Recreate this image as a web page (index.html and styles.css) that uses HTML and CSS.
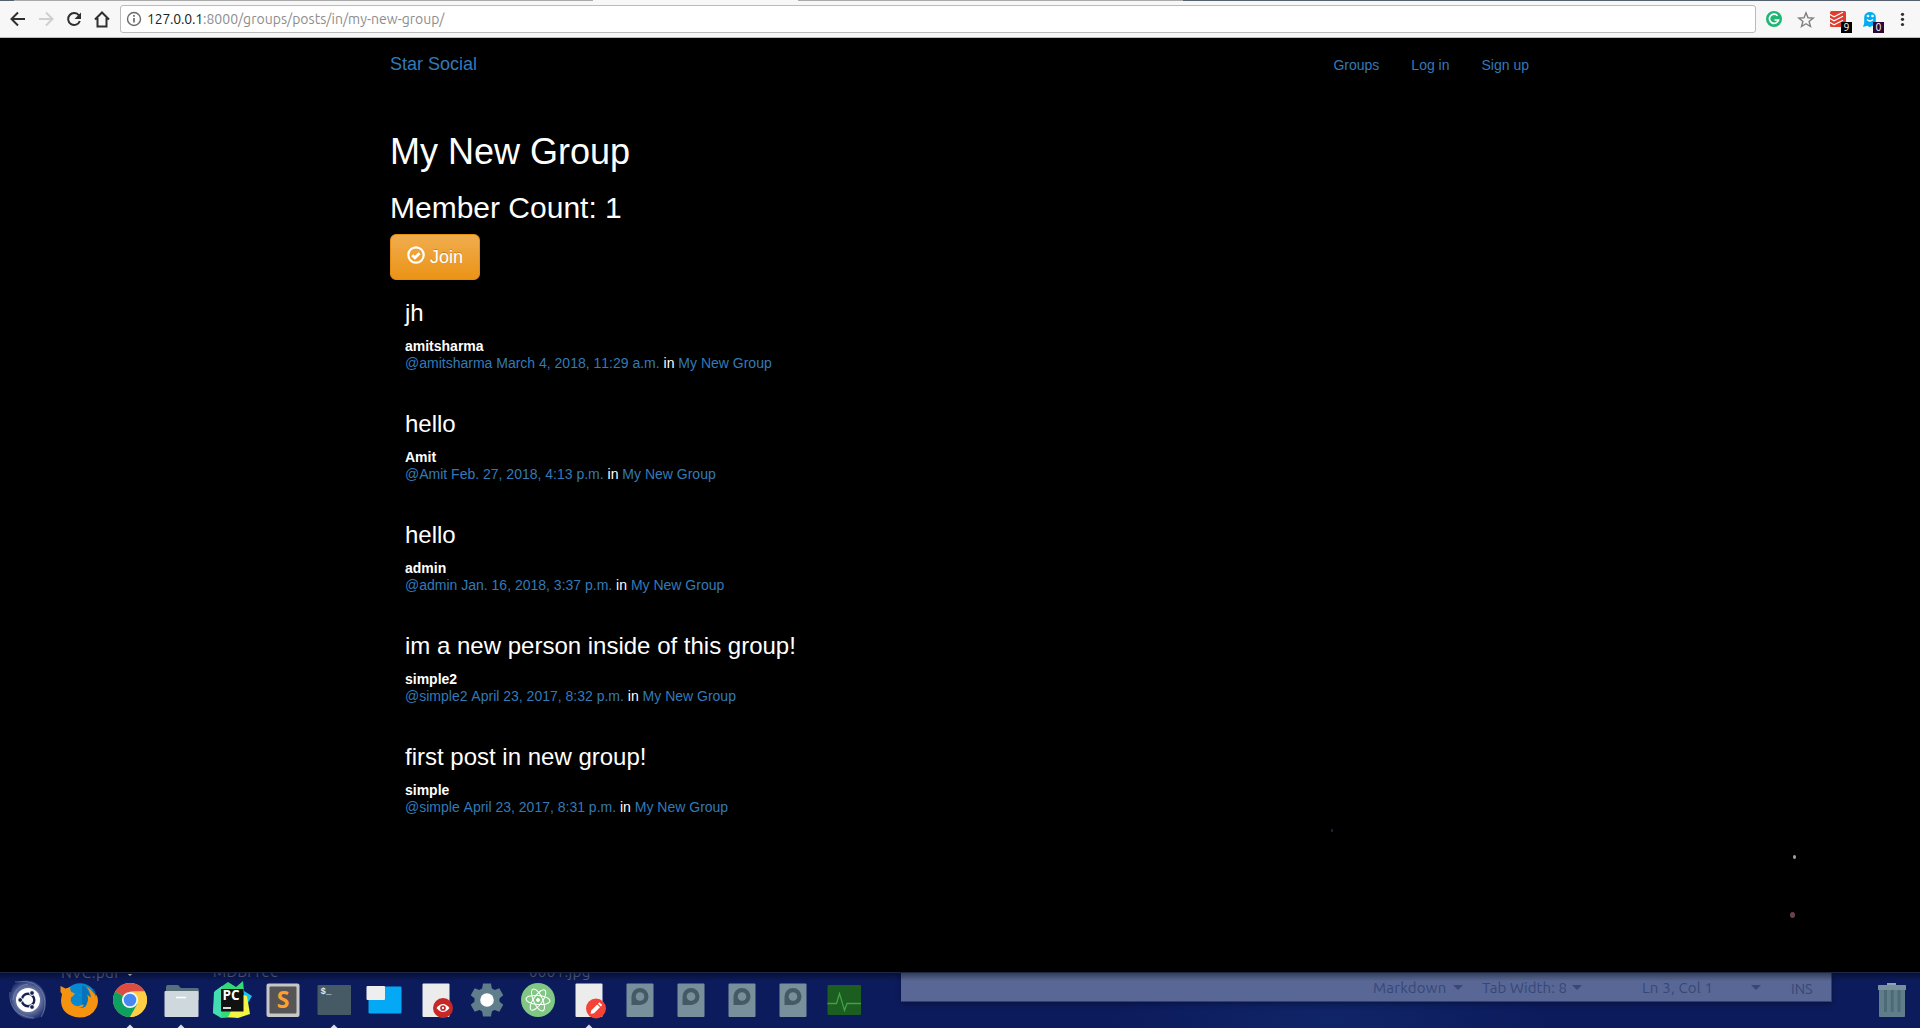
FILE: index.html
```html
<!DOCTYPE html>
<html lang="en">
<head>
<meta charset="utf-8">
<title>Star Social</title>
<link rel="stylesheet" href="styles.css">
</head>
<body>
<div class="screen">
  <header class="toolbar">
    <div class="tab-edge"><i class="te-dark a"></i><i class="te-gray b"></i><i class="te-open c"></i><i class="te-gray d"></i><i class="te-dark e"></i></div>
    <svg class="nav-icons" viewBox="0 0 120 36" fill="none" stroke="#2f2f2f" stroke-width="2">
      <path d="M25 18H12M18 11.5L11.5 18l6.500 6.500"/>
      <path stroke="#cfcfcf" d="M39 18h13M46 11.500L52.500 18 46 24.500"/>
      <path d="M79 14.500A6 6 0 1 0 79.800 20"/><path fill="#2f2f2f" stroke="none" d="M81 11.500v6.500h-6.500z"/>
      <path d="M95 18.500L102 11.500l7 7M97.500 17v8.500h9V17"/>
    </svg>
    <div class="omnibox">
      <svg class="info" viewBox="0 0 16 16" fill="none" stroke="#6b6b6b" stroke-width="1.400"><circle cx="8" cy="8" r="6.500"/><path d="M8 7v4.500M8 4v1.700" stroke-width="1.700"/></svg>
      <span class="url"><b>127.0.0.1</b>:8000/groups/posts/in/my-new-group/</span>
    </div>
    <svg class="ext-icons" viewBox="0 0 163 36">
      <circle cx="17" cy="18" r="8" fill="#1db774"/><path d="M20.500 14.700A4.600 4.600 0 1 0 21.500 19H17.500" fill="none" stroke="#fff" stroke-width="1.700"/>
      <path d="M49 11.800l2 5 5.200.300-4.100 3.300 1.400 5.100L49 22.700l-4.500 2.800 1.400-5.100-4.100-3.300 5.200-.300z" fill="none" stroke="#808080" stroke-width="1.400"/>
      <rect x="73" y="10" width="16" height="16" rx="1.500" fill="#e23c2e"/>
      <path d="M73 13.500l4 2.200 9-4.500M73 17.500l4 2.200 9-4.500M73 21.500l4 2.200 9-4.500" stroke="#fff" stroke-width="1.200" fill="none"/>
      <rect x="84" y="21" width="11" height="11" fill="#000"/>
      <path d="M106 26l1.200-4V16a5.800 5 0 0 1 11.600 0v5l1.500 4-3 .800-2-1-2.500 1.500-2.500-1.500z" fill="#00aef0"/>
      <circle cx="111" cy="15" r="1.300" fill="#fff"/><circle cx="115.500" cy="15" r="1.300" fill="#fff"/><path d="M110 18.500q3 3 6 0" stroke="#fff" fill="none" stroke-width="1.200"/>
      <rect x="116" y="21" width="11" height="11" fill="#2b0638"/>
      <g class="badge-num"><text x="89.500" y="30.300">9</text><text x="121.500" y="30.300">0</text></g>
      <g fill="#2f2f2f"><circle cx="145.500" cy="13.300" r="1.600"/><circle cx="145.500" cy="18.300" r="1.600"/><circle cx="145.500" cy="23.500" r="1.600"/></g>
    </svg>
  </header>

  <main class="page">
    <i class="star s1"></i><i class="star s2"></i><i class="star s3"></i>
    <div class="container">
      <nav class="navbar">
        <a class="brand">Star Social</a>
        <div class="links"><a>Groups</a><a>Log in</a><a>Sign up</a></div>
      </nav>
      <h1>My New Group</h1>
      <h2>Member Count: 1</h2>
      <a class="btn">
        <svg class="ok" viewBox="0 0 18 18" fill="none" stroke="#fff"><circle cx="9" cy="9" r="7.700" stroke-width="2.200"/><path d="M5.200 9.200l2.700 2.600 4.700-4.600" stroke-width="2.800"/></svg>
        <span>Join</span>
      </a>
      <section class="posts">
        <article><h3>jh</h3><strong>amitsharma</strong><p><a>@amitsharma</a> <a>March 4, 2018, 11:29 a.m.</a> in <a>My New Group</a></p></article>
        <article><h3>hello</h3><strong>Amit</strong><p><a>@Amit</a> <a>Feb. 27, 2018, 4:13 p.m.</a> in <a>My New Group</a></p></article>
        <article><h3>hello</h3><strong>admin</strong><p><a>@admin</a> <a>Jan. 16, 2018, 3:37 p.m.</a> in <a>My New Group</a></p></article>
        <article><h3>im a new person inside of this group!</h3><strong>simple2</strong><p><a>@simple2</a> <a>April 23, 2017, 8:32 p.m.</a> in <a>My New Group</a></p></article>
        <article><h3>first post in new group!</h3><strong>simple</strong><p><a>@simple</a> <a>April 23, 2017, 8:31 p.m.</a> in <a>My New Group</a></p></article>
      </section>
    </div>
  </main>

  <footer class="dock">
    <span class="ghost g1">NVC.pdf</span><span class="ghost g2">MDBFree</span><span class="ghost g3">0001.jpg</span>
    <div class="editor">
      <span class="st md">Markdown</span><i class="caret c1"></i>
      <span class="st tw">Tab Width: 8</span><i class="caret c2"></i>
      <span class="st ln">Ln 3, Col 1</span><i class="caret c3"></i>
      <span class="st ins">INS</span>
    </div>
    <div class="apps">
      <svg viewBox="0 0 51 54"><defs><radialGradient id="halo" gradientUnits="userSpaceOnUse" cx="26" cy="26" r="21"><stop offset=".55" stop-color="#8f9cc2"/><stop offset="1" stop-color="#1c2c6a"/></radialGradient></defs>
        <path d="M11 11Q20 5 30 7Q43 12 44 26Q44 36 41 42Q33 47 22 44Q10 39 9 26Q8 18 11 11Z" fill="url(#halo)" opacity=".75"/><path d="M13 8Q36 4 42 22Q45 34 39 43M8 18Q6 41 32 44M11 26Q12 12 26 10" fill="none" stroke="#9ba7c8" stroke-width=".7" opacity=".7"/>
        <circle cx="26" cy="26" r="12" fill="#fff"/><circle cx="26" cy="26" r="6.300" fill="none" stroke="#17244f" stroke-width="2.400"/><g fill="#17244f" stroke="#fff" stroke-width="1"><circle cx="18.200" cy="26" r="2.400"/><circle cx="30" cy="19" r="2.400"/><circle cx="30" cy="33" r="2.400"/></g></svg>
      <svg viewBox="0 0 51 54"><circle cx="27" cy="26" r="16.800" fill="#0788d1"/><path d="M29 11q6 2 7 9l5-6q4 7 0 14-4 7-12 4z" fill="#075a9c" opacity=".45"/><path d="M7.500 12l5 2.500 5-1.500q-1 3 1 5l3.500 1.500q-1 2-4 4-1 3 1 6 4 4 8 2 2-1 4-1-2 4-6 3 7 2 9-4 2-5 0-9l4 3q-1-7-5-11 7 4 10 10l.500-2q3 7 0 13-5 10-17 10Q8 42 8 26l1-6-1.500-2z" fill="#f5920f"/></svg>
      <svg viewBox="0 0 51 54"><circle cx="26" cy="26" r="17" fill="#ffc94d"/><path d="M26 26L11.300 17.500A17 17 0 0 1 40.700 17.500H26z" fill="#dd4c40"/><path d="M11.300 17.500A17 17 0 0 0 26 43l8-13-8-4z" fill="#0ea05e"/><path d="M40.700 17.500A17 17 0 0 1 26 43L34 28.500 29 17.500z" fill="#ffce44"/><circle cx="26" cy="26" r="7.200" fill="#4688f1" stroke="#f3f3f3" stroke-width="1.800"/><path class="run" d="M26 50.500l3.500 3.500h-7zM22.500-1h7L26 2z"/></svg>
      <svg viewBox="0 0 51 54"><path d="M11 13q0-2 2-2h10l3 3h16q2 0 2 2v10H11z" fill="#566f7b"/><rect x="9.500" y="17" width="34" height="26" rx="1" fill="#cfd8dc"/><path d="M21 23.500h10" stroke="#fff" stroke-width="1.500"/><path class="run" d="M26 50.500l3.500 3.500h-7z"/></svg>
      <svg viewBox="0 0 51 54"><path d="M9 17l13-9 8 5 7-6 1 10-6 26-17 1L7 39z" fill="#31db75"/><path d="M8 18l8-6 2 12-3 19-8-4z" fill="#43ddb1"/><path d="M38 17l8 5-9 15z" fill="#13c8f1"/><path d="M34 20l7 2 3 18-12 4-10-1z" fill="#f2f642"/><rect x="15" y="15" width="22.500" height="22.500" fill="#111"/><text class="pc" x="16.500" y="26">PC</text><path d="M17 34h8" stroke="#fff" stroke-width="1.700"/></svg>
      <svg viewBox="0 0 51 54"><rect x="9.500" y="9.500" width="33" height="33.500" rx="2" fill="#c7c7c7"/><rect x="12.500" y="12.500" width="27" height="27" rx="1" fill="#555"/><text class="sublime" x="26" y="34">S</text></svg>
      <svg viewBox="0 0 51 54"><rect x="9.500" y="11" width="33.500" height="30" rx="1" fill="#455a64"/><text class="term" x="12.500" y="20">$_</text><path class="run" d="M26 50.500l3.500 3.500h-7z"/></svg>
      <svg viewBox="0 0 51 54"><rect x="9.500" y="12.500" width="33" height="27" rx="1" fill="#03a9f4"/><rect x="7.500" y="12" width="18.500" height="14" rx="1" fill="#eee"/></svg>
      <svg viewBox="0 0 51 54"><rect x="12.500" y="9.500" width="27" height="33.500" rx="1" fill="#ececec"/><circle cx="33" cy="34" r="10" fill="#c62828"/><path d="M26.500 34q6.500-8 13 0-6.500 8-13 0z" fill="#fff"/><circle cx="33" cy="34" r="2" fill="#fff" stroke="#c62828" stroke-width="1.700"/></svg>
      <svg viewBox="0 0 51 54"><g fill="#607d8b" transform="translate(26 26)"><circle r="12.500"/><g id="tooth"><path d="M-5-11l1-5.500h8l1 5.500v22l-1 5.500h-8l-1-5.500z"/></g><use href="#tooth" transform="rotate(60)"/><use href="#tooth" transform="rotate(120)"/></g><circle cx="26" cy="26" r="6.800" fill="#fff"/></svg>
      <svg viewBox="0 0 51 54"><circle cx="26" cy="26" r="17" fill="#81c784"/><g transform="translate(26 26)" fill="none" stroke="#fff" stroke-width="1"><ellipse rx="12" ry="4.500" transform="rotate(5)"/><ellipse rx="12" ry="4.500" transform="rotate(65)"/><ellipse rx="12" ry="4.500" transform="rotate(125)"/><circle r="1.500" fill="#fff"/></g></svg>
      <svg viewBox="0 0 51 54"><rect x="12.500" y="9.500" width="27" height="33.500" rx="1" fill="#ececec"/><circle cx="33" cy="34.500" r="10" fill="#f44336"/><path d="M27.500 40l.700-3.500 6-6 2.800 2.800-6 6zM35 29.700l1.400-1.400 2.800 2.700-1.400 1.400z" fill="#fff"/><path class="run" d="M26 50.500l3.500 3.500h-7z"/></svg>
      <svg viewBox="0 0 51 54"><g id="doc"><rect x="12.500" y="9.500" width="27" height="33.500" rx="1" fill="#78909c"/><path d="M17.500 31V22.500a8.500 8.500 0 1 1 8.500 8.500z" fill="#455a64"/><circle cx="26" cy="22.500" r="4.300" fill="#78909c"/></g></svg>
      <svg viewBox="0 0 51 54"><use href="#doc"/></svg>
      <svg viewBox="0 0 51 54"><use href="#doc"/></svg>
      <svg viewBox="0 0 51 54"><use href="#doc"/></svg>
      <svg viewBox="0 0 51 54"><rect x="9.500" y="11" width="33.500" height="30" rx="1" fill="#1b5e20"/><path d="M9.500 29.500h9l3-10 5 17 2.500-7h14" fill="none" stroke="#43a047" stroke-width="1.300"/></svg>
    </div>
    <svg class="trash" viewBox="0 0 28 34"><path d="M9 3V0h9v3z" fill="#90a4ae"/><rect x="1" y="4" width="26" height="30" rx="1" fill="#607d8b"/><rect y="2" width="28" height="5" rx=".500" fill="#78909c"/><path d="M7.500 7v22M14.200 7v22M21 7v22" stroke="#4d6b76" stroke-width="3"/></svg>
  </footer>
</div>
</body>
</html>
```
FILE: styles.css
```css
* { box-sizing: border-box; }
body { margin: 0; background: #000; font-family: "Liberation Sans", Arial, sans-serif; font-size: 14px; overflow: hidden; }
h1, h2, h3, p { margin: 0; font-weight: 400; }
.screen { width: 1920px; height: 1028px; display: flex; flex-direction: column; }

.toolbar { position: relative; height: 38px; flex: none; background: #f7f7f7; border-bottom: 1px solid #bdbdbd; display: flex; align-items: flex-start; padding-top: 1px; }
.tab-edge { position: absolute; left: 0; top: 0; width: 100%; height: 1px; display: flex; }
.tab-edge i { height: 1px; }
.te-dark { background: #55616d; }
.te-gray { background: #aaa; }
.a { width: 14px; }
.b { width: 579px; }
.c { width: 205px; }
.d { width: 385px; }
.e { flex: 1; }
.nav-icons { width: 120px; height: 36px; flex: none; }
.omnibox { width: 1636px; height: 28px; margin-top: 4px; flex: none; background: #fff; border: 1px solid #bbb; border-radius: 3px; display: flex; align-items: center; padding-left: 5px; }
.info { width: 16px; height: 16px; flex: none; }
.url { margin-left: 5px; font: 14px/20px Ubuntu, "Noto Sans", sans-serif; color: #8d8d8d; white-space: nowrap; letter-spacing: .02px; }
.url b { font-weight: 400; color: #222; letter-spacing: -.2px; }
.ext-icons { width: 163px; height: 36px; margin-left: 1px; flex: none; }
.badge-num { font: 10.5px Ubuntu, "Noto Sans", sans-serif; fill: #fff; text-anchor: middle; }

.page { position: relative; height: 934px; flex: none; background: #000; color: #fff; }
.page a { color: #337ab7; }
.container { width: 1170px; margin: 0 auto; padding: 0 15px; }
.navbar { height: 94px; display: flex; justify-content: space-between; }
.brand { font-size: 18px; line-height: 20px; padding-top: 16px; }
.links { display: flex; gap: 32px; padding: 17px 0 0; margin-right: 1px; line-height: 20px; }
h1 { font-size: 36px; line-height: 40px; height: 59px; }
h2 { font-size: 30px; line-height: 33px; height: 43px; }
.page .btn { width: 90px; height: 46px; display: flex; align-items: center; gap: 5px; padding-left: 16px; border: 1px solid #e38d13; border-radius: 6px; background: linear-gradient(#f0ad4e, #eb9316); color: #fff; font-size: 18px; text-shadow: 0 -1px 0 rgba(0,0,0,.2); }
.ok { width: 18px; height: 18px; margin-top: -4px; }
.posts { padding: 20px 15px 0; }
article { height: 111px; }
h3 { font-size: 24px; line-height: 26px; margin-bottom: 12px; }
strong { display: block; line-height: 17px; }
article p { line-height: 17px; font-kerning: none; }
.star { position: absolute; border-radius: 50%; }
.s1 { left: 1331px; top: 791px; width: 2px; height: 3px; background: #38204a; }
.s2 { left: 1793px; top: 817px; width: 3px; height: 4px; background: #a8a294; }
.s3 { left: 1790px; top: 874px; width: 5px; height: 6px; background: #68404f; }

.dock { position: relative; height: 56px; flex: none; overflow: hidden; border-top: 1px solid #1d2847; background: radial-gradient(ellipse 220px 60px at 1330px 50px, #102568, transparent), #0c1b5c; display: flex; justify-content: space-between; }
.dock::after { content: ""; position: absolute; inset: 0 0 auto; height: 8px; background: linear-gradient(rgba(0,0,0,.4), transparent); }
.apps { position: relative; display: flex; margin: 1px 0 0 2px; }
.apps svg { width: 51px; height: 54px; }
.run { fill: #ddd; }
.pc { font: bold 13.5px "Open Sans", sans-serif; fill: #fff; }
.sublime { font: bold 23px "Open Sans", sans-serif; fill: #ff9f2e; text-anchor: middle; }
.term { font: bold 9px "Liberation Mono", monospace; fill: #e4e8ea; }
.ghost { position: absolute; top: -11px; font: 15px/20px Ubuntu, "Noto Sans", sans-serif; color: #5a668c; letter-spacing: .4px; }
.g1 { left: 61px; top: -10px; }
.g2 { left: 213px; }
.g3 { left: 529px; }
.editor { position: absolute; left: 901px; top: 0; width: 931px; height: 29px; background: #586795; border-right: 1px solid #24427b; border-bottom: 1px solid #24427b; box-shadow: 0 2px 5px rgba(0,0,0,.3); color: #374776; }
.st { position: absolute; top: 5px; font: 15px/20px Ubuntu, "Noto Sans", sans-serif; white-space: nowrap; }
.md { left: 472px; letter-spacing: .25px; }
.tw { left: 581px; letter-spacing: .05px; }
.ln { left: 741px; letter-spacing: .2px; }
.ins { left: 890px; top: 6px; font-size: 14.5px; }
.caret { position: absolute; top: 12px; border: 5px solid transparent; border-top-color: #374776; border-bottom: 0; }
.c1 { left: 552px; }
.c2 { left: 671px; }
.c3 { left: 850px; }
.trash { width: 28px; height: 34px; margin: 10px 14px 0 0; }
```
